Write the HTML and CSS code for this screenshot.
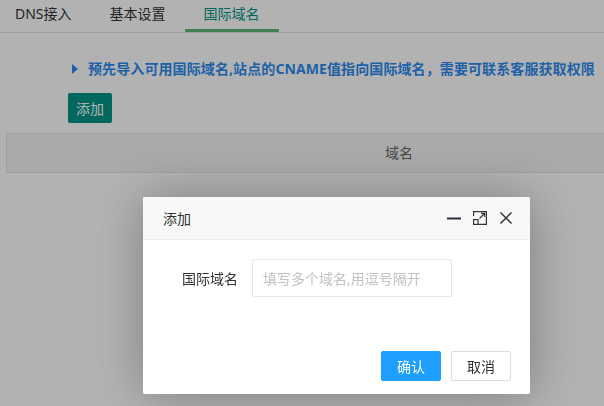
FILE: index.html
```html
<!DOCTYPE html>
<html lang="zh-CN">
<head>
    <meta charset="UTF-8">
    <title>国际域名</title>
    <link rel="stylesheet" href="styles.css">
</head>
<body>
    <div class="page">
        <ul class="tabs">
            <li class="tab">DNS接入</li>
            <li class="tab">基本设置</li>
            <li class="tab active">国际域名</li>
        </ul>

        <div class="content">
            <p class="tip"><span class="arrow"></span>预先导入可用国际域名,站点的CNAME值指向国际域名，需要可联系客服获取权限</p>
            <button class="btn-add">添加</button>
            <div class="table-head">
                <div class="th">域名</div>
            </div>
        </div>
    </div>

    <div class="shade"></div>

    <div class="layer">
        <div class="layer-title">
            <span>添加</span>
            <div class="layer-ops">
                <svg width="16" height="16" viewBox="0 0 16 16"><path d="M1 8.5h14" stroke="#2e2d3c" stroke-width="2"/></svg>
                <svg width="16" height="16" viewBox="0 0 16 16" fill="none" stroke="#333" stroke-width="1.2"><path d="M1.6 6V1.6h12.8v12.8H6"/><rect x="1.6" y="9.6" width="4.4" height="4.8"/><path d="M7.5 8.5l5-5M9 3.3h3.7V7"/></svg>
                <svg width="16" height="16" viewBox="0 0 16 16"><path d="M2.5 2.5l11 11M13.5 2.5l-11 11" stroke="#333" stroke-width="1.5"/></svg>
            </div>
        </div>
        <div class="layer-body">
            <label class="form-label">国际域名</label>
            <input class="form-input" type="text" placeholder="填写多个域名,用逗号隔开">
        </div>
        <div class="layer-btns">
            <button class="btn btn-ok">确认</button>
            <button class="btn btn-cancel">取消</button>
        </div>
    </div>
</body>
</html>
```

FILE: styles.css
```css
* {
    box-sizing: border-box;
}
body {
    margin: 0;
    font-family: "Noto Sans", "Noto Sans CJK SC", sans-serif;
    font-size: 14px;
    color: #333;
    background: #fff;
    overflow: hidden;
}
.tabs {
    display: flex;
    margin: 0;
    padding: 0;
    list-style: none;
    height: 33px;
    border-bottom: 1px solid #e2e2e2;
}
.tab {
    padding: 0 19px;
    line-height: 27px;
    height: 32px;
    color: #333;
}
.tab:first-child {
    padding-left: 15px;
}
.tab.active {
    color: #009688;
    border-bottom: 3px solid #5fb878;
}
.content {
    padding: 26px 0 0 6px;
}
.tip {
    margin: 0 0 14px 66px;
    display: flex;
    align-items: center;
    font-weight: bold;
    color: #2d8cf0;
    font-size: 14px;
    letter-spacing: 0.1px;
    line-height: 20px;
    white-space: nowrap;
}
.arrow {
    width: 0;
    height: 0;
    border-top: 5px solid transparent;
    border-bottom: 5px solid transparent;
    border-left: 6px solid #2d8cf0;
    margin-right: 10px;
}
.btn-add {
    display: block;
    margin-left: 62px;
    height: 30px;
    padding: 0 8px;
    border: none;
    border-radius: 2px;
    background: #009688;
    color: #fff;
    font-family: inherit;
    font-size: 14px;
}
.table-head {
    margin-top: 10px;
    margin-right: -10px;
    height: 40px;
    background: #f2f2f2;
    border: 1px solid #e6e6e6;
}
.th {
    line-height: 38px;
    padding-left: 378px;
    color: #666;
}
.shade {
    position: fixed;
    inset: 0;
    background: rgba(0, 0, 0, 0.3);
}
.layer {
    position: fixed;
    left: 143px;
    top: 197px;
    width: 387px;
    height: 197px;
    background: #fff;
    border-radius: 2px;
    box-shadow: 1px 1px 50px rgba(0, 0, 0, 0.3);
}
.layer-title {
    display: flex;
    justify-content: space-between;
    align-items: center;
    height: 43px;
    padding: 0 16px 0 20px;
    background: #f8f8f8;
    border-bottom: 1px solid #eee;
    border-radius: 2px 2px 0 0;
}
.layer-ops {
    display: flex;
    gap: 10px;
}
.layer-ops svg {
    display: block;
}
.layer-body {
    display: flex;
    align-items: center;
    padding: 19px 0 0 39px;
}
.form-label {
    width: 56px;
    margin-right: 14px;
    color: #333;
    white-space: nowrap;
}
.form-input {
    width: 200px;
    height: 38px;
    padding: 0 10px;
    border: 1px solid #e6e6e6;
    border-radius: 2px;
    font-family: inherit;
    font-size: 14px;
}
.form-input::placeholder {
    color: #c2c2c2;
}
.layer-btns {
    display: flex;
    justify-content: flex-end;
    gap: 10px;
    padding: 54px 19px 0 0;
}
.btn {
    width: 60px;
    height: 30px;
    border-radius: 2px;
    font-family: inherit;
    font-size: 14px;
}
.btn-ok {
    background: #1e9fff;
    border: 1px solid #1e9fff;
    color: #fff;
}
.btn-cancel {
    background: #fff;
    border: 1px solid #dedede;
    color: #333;
}
```
